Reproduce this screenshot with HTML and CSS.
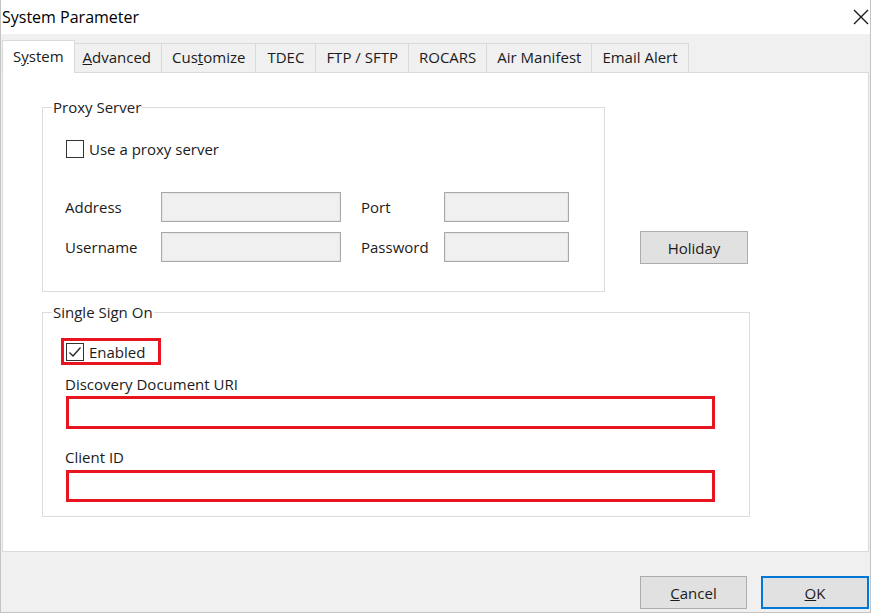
FILE: index.html
```html
<!DOCTYPE html>
<html lang="en">
<head>
  <meta charset="UTF-8" />
  <meta name="viewport" content="width=device-width, initial-scale=1.0"/>
  <title>System Parameter</title>
  <link rel="stylesheet" href="styles.css">
</head>
<body>
  <div class="window">
    <div class="title-bar">
      <span class="title">System Parameter</span>
      <button type="button" class="close-btn" aria-label="Close">
        <svg width="16" height="16" viewBox="0 0 16 16"><path d="M1 1L15 15M15 1L1 15" stroke="#1a1a1a" stroke-width="1.4" fill="none"/></svg>
      </button>
    </div>

    <!-- Tabs -->
    <div class="tab-strip">
      <div class="tab active">S<u>y</u>stem</div>
      <div class="tab"><u>A</u>dvanced</div>
      <div class="tab">Cus<u>t</u>omize</div>
      <div class="tab">TDEC</div>
      <div class="tab">FTP / SFTP</div>
      <div class="tab">ROCARS</div>
      <div class="tab">Air Manifest</div>
      <div class="tab">Email Alert</div>
    </div>

    <div class="tab-panel">
      <!-- Proxy Server -->
      <div class="proxy-row">
        <fieldset class="group proxy-group">
          <legend>Proxy Server</legend>
          <label class="check">
            <span class="box"></span>
            Use a proxy server
          </label>
          <div class="proxy-grid">
            <label for="address">Address</label>
            <input type="text" id="address" class="field wide">
            <label for="port">Port</label>
            <input type="text" id="port" class="field short">
            <label for="username">Username</label>
            <input type="text" id="username" class="field wide">
            <label for="password">Password</label>
            <input type="password" id="password" class="field short">
          </div>
        </fieldset>
        <button type="button" class="btn holiday">Holiday</button>
      </div>

      <!-- Single Sign On -->
      <fieldset class="group sso-group">
        <legend>Single Sign On</legend>
        <label class="check highlight">
          <span class="box checked">
            <svg width="14" height="14" viewBox="0 0 14 14"><path d="M1.5 7.5L5 11L12.5 2.5" stroke="#222" stroke-width="1.3" fill="none"/></svg>
          </span>
          Enabled
        </label>
        <label class="field-label" for="discoveryUri">Discovery Document URI</label>
        <input type="text" id="discoveryUri" class="sso-input">
        <label class="field-label client" for="clientId">Client ID</label>
        <input type="text" id="clientId" class="sso-input last">
      </fieldset>
    </div>

    <div class="footer">
      <button type="button" class="btn"><u>C</u>ancel</button>
      <button type="button" class="btn default"><u>O</u>K</button>
    </div>
  </div>
</body>
</html>
```

FILE: styles.css
```css
* {
  box-sizing: border-box;
}

body {
  margin: 0;
  font-family: "Open Sans", "Noto Sans", sans-serif;
  font-size: 15px;
  color: #1b1b1b;
  background: #fff;
}

.window {
  width: 871px;
  height: 613px;
  display: flex;
  flex-direction: column;
  background: #f0f0f0;
  border: 1px solid #c4c4c4;
  border-top: none;
}

.title-bar {
  height: 34px;
  flex-shrink: 0;
  background: #fff;
  display: flex;
  align-items: center;
  justify-content: space-between;
  padding: 0 1px 0 1px;
}

.title {
  font-size: 16px;
  color: #000;
}

.close-btn {
  border: none;
  background: none;
  padding: 0;
  width: 16px;
  height: 16px;
  display: flex;
}

/* tabs */
.tab-strip {
  height: 38px;
  flex-shrink: 0;
  display: flex;
  align-items: flex-end;
  padding-left: 3px;
}

.tab {
  height: 29px;
  line-height: 27px;
  padding: 0 10px;
  min-width: 61px;
  text-align: center;
  background: #f0f0f0;
  border: 1px solid #d9d9d9;
  border-bottom: none;
  margin-left: -1px;
  white-space: nowrap;
}

.tab:first-child {
  margin-left: 0;
}

.tab.active {
  height: 33px;
  line-height: 30px;
  background: #fff;
  margin: 0 -2px -1px -2px;
  position: relative;
  z-index: 1;
}

.tab-panel {
  flex: 1;
  background: #fff;
  border: 1px solid #dadada;
  margin: 0 1px;
  padding-left: 39px;
}

/* group boxes */
.group {
  margin: 0;
  border: 1px solid #dcdcdc;
  min-width: 0;
}

.group legend {
  padding: 0 1px;
  margin-left: -13px;
  line-height: 20px;
  color: #222;
}

.proxy-row {
  display: flex;
  align-items: flex-end;
  margin-top: 24px;
}

.proxy-group {
  width: 563px;
  padding: 23px 20px 29px 22px;
}

.check {
  display: inline-flex;
  align-items: center;
  gap: 5px;
  height: 18px;
  margin-left: 1px;
}

.box {
  width: 18px;
  height: 18px;
  border: 1px solid #333;
  background: #fff;
  display: flex;
  align-items: center;
  justify-content: center;
}

.proxy-grid {
  display: grid;
  grid-template-columns: 96px 200px 83px 125px;
  grid-auto-rows: 30px;
  row-gap: 10px;
  align-items: center;
  margin-top: 30px;
}

.field {
  height: 30px;
  background: #f0f0f0;
  border: 1px solid #a8a8a8;
  box-shadow: inset 0 0 0 1px #e6e6e6;
}

.field.wide {
  width: 180px;
}

.field.short {
  width: 125px;
}

.btn {
  width: 107px;
  height: 33px;
  font-family: inherit;
  font-size: 15px;
  color: #1b1b1b;
  background: #e1e1e1;
  border: 1px solid #adadad;
  padding: 0;
}

.holiday {
  width: 108px;
  margin-left: 35px;
  margin-bottom: 28px;
}

/* single sign on */
.sso-group {
  width: 708px;
  margin-top: 10px;
  padding: 16px 20px 14px 22px;
}

.check.highlight {
  height: 27px;
  border: 3px solid #e8141f;
  padding: 0 13px 0 2px;
  margin-left: -4px;
}

.field-label {
  display: block;
  line-height: 20px;
  margin-top: 9px;
}

.field-label.client {
  margin-top: 18px;
}

.sso-input {
  display: block;
  width: 649px;
  height: 33px;
  margin: 2px 0 0 1px;
  border: 3px solid #e8141f;
  background: #fff;
}

.sso-input.last {
  height: 32px;
  margin-top: 3px;
}

.footer {
  height: 60px;
  flex-shrink: 0;
  display: flex;
  justify-content: flex-end;
  gap: 14px;
  padding: 24px 1px 0 0;
}

.btn.default {
  width: 108px;
  border: 2px solid #0078d7;
}
```
